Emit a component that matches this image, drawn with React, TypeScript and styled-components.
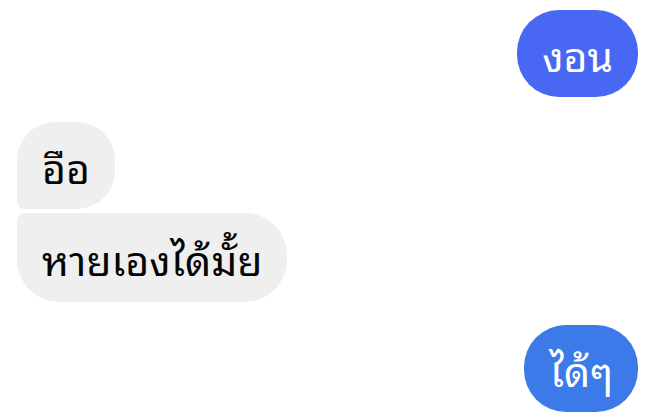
import React from "react";
import styled, { createGlobalStyle } from "styled-components";

const Global = createGlobalStyle`
  html, body { margin: 0; padding: 0; background: #ffffff; }
  body { width: 654px; height: 418px; overflow: hidden; font-family: "Noto Sans Thai Looped", "Noto Sans Thai", "Noto Sans", sans-serif; }
`;

const Chat = styled.div`
  display: flex;
  flex-direction: column;
  padding: 10px 16px 0 17px;
`;

const Row = styled.div<{ $mine?: boolean; $gap: number }>`
  display: flex;
  justify-content: ${(p) => (p.$mine ? "flex-end" : "flex-start")};
  margin-top: ${(p) => p.$gap}px;
`;

type Shape = "single" | "first" | "last";

const Bubble = styled.div<{ $mine?: boolean; $shape: Shape; $bg?: string }>`
  box-sizing: border-box;
  height: ${(p) => (p.$shape === "last" ? 89 : 87)}px;
  display: flex;
  align-items: center;
  padding: 0 25px;
  font-size: 41px;
  line-height: 1;
  color: ${(p) => (p.$mine ? "#ffffff" : "#050505")};
  background: ${(p) => (p.$mine ? p.$bg : "#efefef")};
  border-radius: ${(p) =>
    p.$shape === "first"
      ? "38px 38px 38px 8px"
      : p.$shape === "last"
      ? "8px 42px 42px 42px"
      : "42px"};
`;

export default function App() {
  return (
    <>
      <Global />
      <Chat>
        <Row $mine $gap={0}>
          <Bubble $mine $shape="single" $bg="#4868f3">งอน</Bubble>
        </Row>
        <Row $gap={25}>
          <Bubble $shape="first">อือ</Bubble>
        </Row>
        <Row $gap={4}>
          <Bubble $shape="last">หายเองได้มั้ย</Bubble>
        </Row>
        <Row $mine $gap={23}>
          <Bubble $mine $shape="single" $bg="#3c7ae9">ได้ๆ</Bubble>
        </Row>
      </Chat>
    </>
  );
}
